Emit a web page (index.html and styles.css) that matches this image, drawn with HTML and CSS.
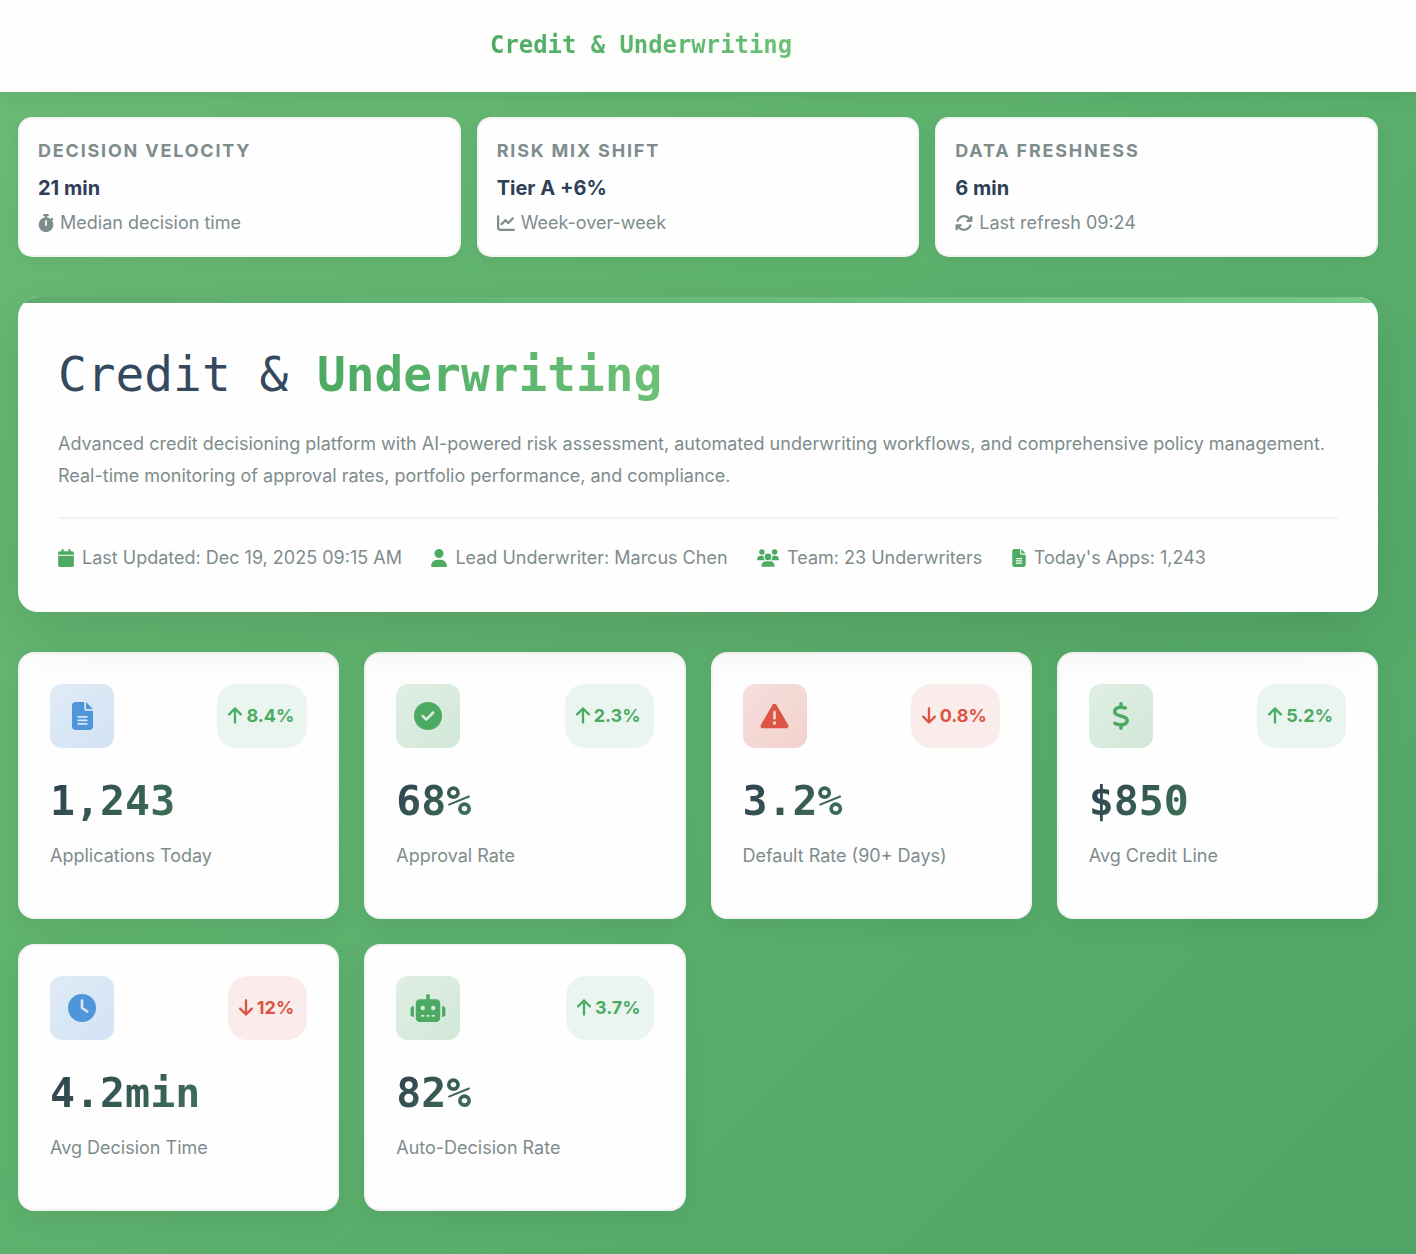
FILE: index.html
```html
<!DOCTYPE html>
<html lang="en">
<head>
    <meta charset="UTF-8">
    <meta name="viewport" content="width=device-width, initial-scale=1.0">
    <title>Credit &amp; Underwriting</title>
    <link rel="stylesheet" href="styles.css">
</head>
<body>
    <!-- Icon set -->
    <svg class="icon-defs" xmlns="http://www.w3.org/2000/svg">
        <symbol id="i-stopwatch" viewBox="0 0 448 512"><path d="M176 0c-17.7 0-32 14.3-32 32s14.3 32 32 32h16V98.4C92.3 113.8 16 200 16 304c0 114.9 93.1 208 208 208s208-93.1 208-208c0-41.8-12.3-80.7-33.5-113.2l24.1-24.1c12.5-12.5 12.5-32.8 0-45.3s-32.8-12.5-45.3 0L355.7 143c-28.1-23-62.2-38.8-99.7-44.6V64h16c17.7 0 32-14.3 32-32s-14.3-32-32-32H224 176zm72 192V320c0 13.3-10.7 24-24 24s-24-10.7-24-24V192c0-13.3 10.7-24 24-24s24 10.7 24 24z"/></symbol>
        <symbol id="i-chart" viewBox="0 0 512 512"><path d="M64 64c0-17.7-14.3-32-32-32S0 46.3 0 64V400c0 44.2 35.8 80 80 80H480c17.7 0 32-14.3 32-32s-14.3-32-32-32H80c-8.8 0-16-7.2-16-16V64zm406.6 86.6c12.5-12.5 12.5-32.8 0-45.3s-32.8-12.5-45.3 0L320 210.7l-57.4-57.4c-12.5-12.5-32.8-12.5-45.3 0l-112 112c-12.5 12.5-12.5 32.8 0 45.3s32.8 12.5 45.3 0L240 221.3l57.4 57.4c12.5 12.5 32.8 12.5 45.3 0l128-128z"/></symbol>
        <symbol id="i-sync" viewBox="0 0 512 512"><path d="M105.1 202.6c7.7-21.8 20.2-42.3 37.8-59.8c62.5-62.5 163.8-62.5 226.3 0L386.3 160H352c-17.7 0-32 14.3-32 32s14.3 32 32 32H463.5c0 0 0 0 0 0h.4c17.7 0 32-14.3 32-32V80c0-17.7-14.3-32-32-32s-32 14.3-32 32v35.2L414.4 97.6c-87.5-87.5-229.3-87.5-316.8 0C73.2 122 55.6 150.7 44.8 181.4c-5.9 16.7 2.9 34.9 19.5 40.8s34.9-2.9 40.8-19.5zM39 289.3c-5 1.5-9.8 4.2-13.7 8.2c-4 4-6.7 8.8-8.1 14c-.3 1.2-.6 2.5-.8 3.8c-.3 1.7-.4 3.4-.4 5.1V432c0 17.7 14.3 32 32 32s32-14.3 32-32V396.9l17.6 17.5 0 0c87.5 87.4 229.3 87.4 316.7 0c24.4-24.4 42.1-53.1 52.9-83.7c5.9-16.7-2.9-34.9-19.5-40.8s-34.9 2.9-40.8 19.5c-7.7 21.8-20.2 42.3-37.8 59.8c-62.5 62.5-163.8 62.5-226.3 0l-.1-.1L125.6 352H160c17.7 0 32-14.3 32-32s-14.3-32-32-32H48.4c-1.6 0-3.2 .1-4.8 .3s-3.1 .5-4.6 1z"/></symbol>
        <symbol id="i-calendar" viewBox="0 0 448 512"><path d="M96 32V64H48C21.5 64 0 85.5 0 112v48H448V112c0-26.5-21.5-48-48-48H352V32c0-17.7-14.3-32-32-32s-32 14.3-32 32V64H160V32c0-17.7-14.3-32-32-32S96 14.3 96 32zM448 192H0V464c0 26.5 21.5 48 48 48H400c26.5 0 48-21.5 48-48V192z"/></symbol>
        <symbol id="i-user" viewBox="0 0 448 512"><path d="M224 256A128 128 0 1 0 224 0a128 128 0 1 0 0 256zm-45.7 48C79.8 304 0 383.8 0 482.3C0 498.7 13.3 512 29.7 512H418.3c16.4 0 29.7-13.3 29.7-29.7C448 383.8 368.2 304 269.7 304H178.3z"/></symbol>
        <symbol id="i-users" viewBox="0 0 640 512"><path d="M144 0a80 80 0 1 1 0 160A80 80 0 1 1 144 0zM512 0a80 80 0 1 1 0 160A80 80 0 1 1 512 0zM0 298.7C0 239.8 47.8 192 106.7 192h42.7c15.9 0 31 3.5 44.6 9.7c-1.3 7.2-1.9 14.7-1.9 22.3c0 38.2 16.8 72.5 43.3 96c-.2 0-.4 0-.7 0H21.3C9.6 320 0 310.4 0 298.7zM405.3 320c-.2 0-.4 0-.7 0c26.6-23.5 43.3-57.8 43.3-96c0-7.6-.7-15-1.9-22.3c13.6-6.3 28.7-9.7 44.6-9.7h42.7C592.2 192 640 239.8 640 298.7c0 11.8-9.6 21.3-21.3 21.3H405.3zM224 224a96 96 0 1 1 192 0 96 96 0 1 1 -192 0zM128 485.3C128 411.7 187.7 352 261.3 352H378.7C452.3 352 512 411.7 512 485.3c0 14.7-11.9 26.7-26.7 26.7H154.7c-14.7 0-26.7-11.9-26.7-26.7z"/></symbol>
        <symbol id="i-file" viewBox="0 0 384 512"><path d="M64 0C28.7 0 0 28.7 0 64V448c0 35.3 28.7 64 64 64H320c35.3 0 64-28.7 64-64V160H256c-17.7 0-32-14.3-32-32V0H64zM256 0V128H384L256 0zM112 256H272c8.8 0 16 7.2 16 16s-7.2 16-16 16H112c-8.8 0-16-7.2-16-16s7.2-16 16-16zm0 64H272c8.8 0 16 7.2 16 16s-7.2 16-16 16H112c-8.8 0-16-7.2-16-16s7.2-16 16-16zm0 64H272c8.8 0 16 7.2 16 16s-7.2 16-16 16H112c-8.8 0-16-7.2-16-16s7.2-16 16-16z"/></symbol>
        <symbol id="i-check" viewBox="0 0 512 512"><path d="M256 512A256 256 0 1 0 256 0a256 256 0 1 0 0 512zM369 209L241 337c-9.4 9.4-24.6 9.4-33.9 0l-64-64c-9.4-9.4-9.4-24.6 0-33.9s24.6-9.4 33.9 0l47 47L335 175c9.4-9.4 24.6-9.4 33.9 0s9.4 24.6 0 33.9z"/></symbol>
        <symbol id="i-warning" viewBox="0 0 512 512"><path d="M256 32c14.2 0 27.3 7.5 34.5 19.8l216 368c7.3 12.4 7.3 27.7 .2 40.1S486.3 480 472 480H40c-14.3 0-27.6-7.7-34.7-20.1s-7-27.8 .2-40.1l216-368C228.7 39.5 241.8 32 256 32zm0 128c-13.3 0-24 10.7-24 24V296c0 13.3 10.7 24 24 24s24-10.7 24-24V184c0-13.3-10.7-24-24-24zm32 224a32 32 0 1 0 -64 0 32 32 0 1 0 64 0z"/></symbol>
        <symbol id="i-dollar" viewBox="0 0 320 512"><path d="M160 0c17.7 0 32 14.3 32 32V67.7c1.6 .2 3.1 .4 4.7 .7c.4 .1 .7 .1 1.1 .2l48 8.8c17.4 3.2 28.9 19.9 25.7 37.2s-19.9 28.9-37.2 25.7l-47.5-8.7c-31.3-4.6-58.9-1.5-78.3 6.2s-27.2 18.3-29 28.1c-2 10.7-.5 16.7 1.2 20.4c1.8 3.9 5.5 8.3 12.8 13.2c16.3 10.7 41.3 17.7 73.7 26.3l2.9 .8c28.6 7.6 63.6 16.8 89.6 33.8c14.2 9.3 27.6 21.9 35.9 39.5c8.5 17.9 10.3 37.9 6.4 59.2c-6.9 38-33.1 63.4-65.6 76.7c-13.7 5.6-28.6 9.2-44.4 11V480c0 17.7-14.3 32-32 32s-32-14.3-32-32V445.1c-.4-.1-.9-.1-1.3-.2l-.2 0 0 0c-24.4-3.8-64.5-14.3-91.5-26.3c-16.1-7.2-23.4-26.1-16.2-42.2s26.1-23.4 42.2-16.2c20.9 9.3 55.3 18.5 75.2 21.6c31.9 4.7 58.2 2 76-5.3c16.9-6.9 24.6-16.9 26.8-28.9c1.9-10.6 .4-16.7-1.3-20.4c-1.9-4-5.6-8.4-13-13.3c-16.4-10.7-41.5-17.7-74-26.3l-2.8-.7 0 0C119.4 279.3 84.4 270 58.4 253c-14.2-9.3-27.5-22-35.8-39.6c-8.4-17.9-10.1-37.9-6.1-59.2C23.7 116 52.3 91.2 84.8 78.3c13.3-5.3 27.9-8.9 43.2-11V32c0-17.7 14.3-32 32-32z"/></symbol>
        <symbol id="i-clock" viewBox="0 0 512 512"><path d="M256 0a256 256 0 1 1 0 512A256 256 0 1 1 256 0zM232 120V256c0 8 4 15.5 10.7 20l96 64c11 7.4 25.9 4.4 33.3-6.7s4.4-25.9-6.7-33.3L280 243.2V120c0-13.3-10.7-24-24-24s-24 10.7-24 24z"/></symbol>
        <symbol id="i-robot" viewBox="0 0 640 512"><path d="M320 0c17.7 0 32 14.3 32 32V96H472c39.8 0 72 32.2 72 72V440c0 39.8-32.2 72-72 72H168c-39.8 0-72-32.2-72-72V168c0-39.8 32.2-72 72-72H288V32c0-17.7 14.3-32 32-32zM208 384c-8.8 0-16 7.2-16 16s7.2 16 16 16h32c8.8 0 16-7.2 16-16s-7.2-16-16-16H208zm96 0c-8.8 0-16 7.2-16 16s7.2 16 16 16h32c8.8 0 16-7.2 16-16s-7.2-16-16-16H304zm96 0c-8.8 0-16 7.2-16 16s7.2 16 16 16h32c8.8 0 16-7.2 16-16s-7.2-16-16-16H400zM264 256a40 40 0 1 0 -80 0 40 40 0 1 0 80 0zm152 40a40 40 0 1 0 0-80 40 40 0 1 0 0 80zM48 224H64V416H48c-26.5 0-48-21.5-48-48V272c0-26.5 21.5-48 48-48zm544 0c26.5 0 48 21.5 48 48v96c0 26.5-21.5 48-48 48H576V224h16z"/></symbol>
        <symbol id="i-up" viewBox="0 0 384 512"><path d="M214.6 41.4c-12.5-12.5-32.8-12.5-45.3 0l-160 160c-12.5 12.5-12.5 32.8 0 45.3s32.8 12.5 45.3 0L160 141.2V448c0 17.7 14.3 32 32 32s32-14.3 32-32V141.2L329.4 246.6c12.5 12.5 32.8 12.5 45.3 0s12.5-32.8 0-45.3l-160-160z"/></symbol>
        <symbol id="i-down" viewBox="0 0 384 512"><path d="M169.4 470.6c12.5 12.5 32.8 12.5 45.3 0l160-160c12.5-12.5 12.5-32.8 0-45.3s-32.8-12.5-45.3 0L224 370.8 224 64c0-17.7-14.3-32-32-32s-32 14.3-32 32l0 306.7L54.6 265.4c-12.5-12.5-32.8-12.5-45.3 0s-12.5 32.8 0 45.3l160 160z"/></symbol>
    </svg>

    <header class="top-bar">
        <div class="top-title">Credit &amp; Underwriting</div>
    </header>

    <main class="page">
        <section class="strip">
            <div class="strip-card">
                <div class="strip-label">Decision Velocity</div>
                <div class="strip-value">21 min</div>
                <div class="strip-note"><svg class="ic ic-stopwatch"><use href="#i-stopwatch"/></svg>Median decision time</div>
            </div>
            <div class="strip-card">
                <div class="strip-label">Risk Mix Shift</div>
                <div class="strip-value">Tier A +6%</div>
                <div class="strip-note"><svg class="ic ic-chart"><use href="#i-chart"/></svg>Week-over-week</div>
            </div>
            <div class="strip-card">
                <div class="strip-label">Data Freshness</div>
                <div class="strip-value">6 min</div>
                <div class="strip-note"><svg class="ic ic-chart"><use href="#i-sync"/></svg>Last refresh 09:24</div>
            </div>
        </section>

        <section class="hero">
            <h1>Credit &amp; <span class="accent">Underwriting</span></h1>
            <p class="hero-text">Advanced credit decisioning platform with AI-powered risk assessment, automated underwriting workflows, and comprehensive policy management. Real-time monitoring of approval rates, portfolio performance, and compliance.</p>
            <div class="hero-meta">
                <div class="meta-item"><svg class="mi mi-cal"><use href="#i-calendar"/></svg>Last Updated: Dec 19, 2025 09:15 AM</div>
                <div class="meta-item"><svg class="mi mi-cal"><use href="#i-user"/></svg>Lead Underwriter: Marcus Chen</div>
                <div class="meta-item"><svg class="mi mi-users"><use href="#i-users"/></svg>Team: 23 Underwriters</div>
                <div class="meta-item"><svg class="mi mi-file"><use href="#i-file"/></svg>Today's Apps: 1,243</div>
            </div>
        </section>

        <section class="metrics">
            <div class="metric">
                <div class="metric-top">
                    <div class="metric-icon blue"><svg class="mic mic-file"><use href="#i-file"/></svg></div>
                    <div class="trend up"><svg class="arrow"><use href="#i-up"/></svg>8.4%</div>
                </div>
                <div class="metric-value">1,243</div>
                <div class="metric-label">Applications Today</div>
            </div>
            <div class="metric">
                <div class="metric-top">
                    <div class="metric-icon green"><svg class="mic"><use href="#i-check"/></svg></div>
                    <div class="trend up"><svg class="arrow"><use href="#i-up"/></svg>2.3%</div>
                </div>
                <div class="metric-value">68%</div>
                <div class="metric-label">Approval Rate</div>
            </div>
            <div class="metric">
                <div class="metric-top">
                    <div class="metric-icon red"><svg class="mic mic-warn"><use href="#i-warning"/></svg></div>
                    <div class="trend down"><svg class="arrow"><use href="#i-down"/></svg>0.8%</div>
                </div>
                <div class="metric-value">3.2%</div>
                <div class="metric-label">Default Rate (90+ Days)</div>
            </div>
            <div class="metric">
                <div class="metric-top">
                    <div class="metric-icon green"><svg class="mic mic-dollar"><use href="#i-dollar"/></svg></div>
                    <div class="trend up"><svg class="arrow"><use href="#i-up"/></svg>5.2%</div>
                </div>
                <div class="metric-value">$850</div>
                <div class="metric-label">Avg Credit Line</div>
            </div>
            <div class="metric">
                <div class="metric-top">
                    <div class="metric-icon blue"><svg class="mic"><use href="#i-clock"/></svg></div>
                    <div class="trend down"><svg class="arrow"><use href="#i-down"/></svg>12%</div>
                </div>
                <div class="metric-value">4.2min</div>
                <div class="metric-label">Avg Decision Time</div>
            </div>
            <div class="metric">
                <div class="metric-top">
                    <div class="metric-icon green"><svg class="mic mic-robot"><use href="#i-robot"/></svg></div>
                    <div class="trend up"><svg class="arrow"><use href="#i-up"/></svg>3.7%</div>
                </div>
                <div class="metric-value">82%</div>
                <div class="metric-label">Auto-Decision Rate</div>
            </div>
        </section>
    </main>
</body>
</html>
```

FILE: styles.css
```css
* {
    box-sizing: border-box;
}
body {
    font-family: Inter, "Liberation Sans", sans-serif;
    margin: 0;
    min-height: 1254px;
    background: linear-gradient(135deg, #6abb74 0%, #4fa565 100%);
    color: #2c3e50;
}
.icon-defs {
    display: none;
}
svg {
    fill: currentColor;
    flex-shrink: 0;
}

/* Top bar */
.top-bar {
    height: 92px;
    background: #fdfefc;
    padding: 0 0 2px 490px;
    display: flex;
    align-items: center;
    box-shadow: 0 2px 20px rgba(0, 0, 0, 0.08);
}
.top-title {
    font-family: "DejaVu Sans Mono", monospace;
    font-size: 23.9px;
    font-weight: 700;
    background: linear-gradient(90deg, #4caa63, #6cc077);
    -webkit-background-clip: text;
    background-clip: text;
    color: transparent;
}

.page {
    padding: 25px 38px 43px 18px;
}

/* Status strip */
.strip {
    display: grid;
    grid-template-columns: repeat(3, 1fr);
    gap: 16px;
    margin-bottom: 40px;
}
.strip-card {
    height: 140px;
    background: #fdfefd;
    border: 2px solid rgba(240, 243, 242, 0.9);
    border-radius: 14px;
    padding: 20px 18px;
    box-shadow: 0 4px 16px rgba(0, 0, 0, 0.06);
}
.strip-label {
    font-size: 18px;
    font-weight: 700;
    letter-spacing: 1.8px;
    text-transform: uppercase;
    color: #7f8c8d;
    line-height: 24px;
}
.strip-value {
    font-size: 20px;
    font-weight: 700;
    line-height: 28px;
    margin-top: 11px;
    color: #2f3f58;
}
.strip-note {
    display: flex;
    align-items: center;
    gap: 6px;
    font-size: 18px;
    line-height: 24px;
    margin-top: 9px;
    color: #7f8c8d;
}
.ic {
    width: 16px;
    height: 18px;
}
.ic-chart {
    width: 18px;
}

/* Hero */
.hero {
    position: relative;
    height: 315px;
    background: #fdfefd;
    border-radius: 20px;
    overflow: hidden;
    padding: 48px 40px 0;
    margin-bottom: 40px;
    box-shadow: 0 20px 60px rgba(0, 0, 0, 0.1);
}
.hero::before {
    content: "";
    position: absolute;
    top: 0;
    left: 0;
    right: 0;
    height: 6px;
    background: linear-gradient(90deg, #5cab6b, #76c886);
}
.hero h1 {
    font-family: "DejaVu Sans Mono", monospace;
    font-size: 47.8px;
    font-weight: 400;
    line-height: 60px;
    margin: 0 0 23px;
    color: #34495e;
}
.accent {
    font-weight: 700;
    background: linear-gradient(90deg, #4caa63, #6cc077);
    -webkit-background-clip: text;
    background-clip: text;
    color: transparent;
}
.hero-text {
    font-size: 18px;
    line-height: 32px;
    margin: 0;
    color: #7f8c8d;
}
.hero-meta {
    display: flex;
    gap: 29.5px;
    margin-top: 25px;
    padding-top: 26px;
    border-top: 2px solid #f1f3f3;
}
.meta-item {
    display: flex;
    align-items: center;
    gap: 8px;
    font-size: 18px;
    line-height: 26px;
    color: #7f8c8d;
}
.mi {
    height: 18px;
    color: #4caa63;
}
.mi-cal {
    width: 16px;
}
.mi-users {
    width: 22px;
}
.mi-file {
    width: 14px;
}

/* Metric cards */
.metrics {
    display: grid;
    grid-template-columns: repeat(4, 1fr);
    gap: 25px;
}
.metric {
    height: 267px;
    background: #fdfefd;
    border: 2px solid rgba(240, 243, 242, 0.9);
    border-radius: 16px;
    padding: 30px;
    box-shadow: 0 8px 24px rgba(0, 0, 0, 0.06);
}
.metric-top {
    display: flex;
    justify-content: space-between;
    height: 64px;
}
.metric-icon {
    width: 64px;
    height: 64px;
    border-radius: 12px;
    display: flex;
    align-items: center;
    justify-content: center;
}
.metric-icon.blue {
    background: linear-gradient(135deg, #e0ebf6, #d2e3f4);
    color: #4f95da;
}
.metric-icon.green {
    background: linear-gradient(135deg, #e0eee3, #d2e8d9);
    color: #4caa63;
}
.metric-icon.red {
    background: linear-gradient(135deg, #f5dfdc, #f3d2cd);
    color: #dc5444;
}
.mic {
    width: 28px;
    height: 28px;
}
.mic-file {
    width: 21px;
}
.mic-dollar {
    width: 18px;
}
.mic-warn {
    width: 29px;
}
.mic-robot {
    width: 36px;
}
.trend {
    display: flex;
    align-items: center;
    gap: 4px;
    padding: 0 13px 2px 11px;
    border-radius: 20px;
    font-size: 18px;
    font-weight: 700;
}
.trend.up {
    background: #ebf5ef;
    color: #4caa63;
}
.trend.down {
    background: #f9ecea;
    color: #dc5444;
}
.arrow {
    width: 14px;
    height: 19px;
}
.metric-value {
    font-family: "DejaVu Sans Mono", monospace;
    font-size: 41.6px;
    font-weight: 700;
    line-height: 52px;
    margin-top: 27px;
    width: max-content;
    background: linear-gradient(135deg, #2f3f50, #3f7458);
    -webkit-background-clip: text;
    background-clip: text;
    color: transparent;
}
.metric-label {
    font-size: 18px;
    line-height: 26px;
    margin-top: 16px;
    color: #7f8c8d;
}
```
